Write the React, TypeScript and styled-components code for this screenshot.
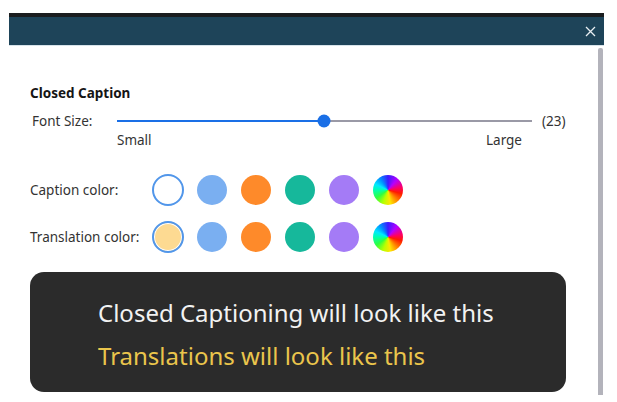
import React from 'react';
import styled, { createGlobalStyle } from 'styled-components';

const GlobalStyle = createGlobalStyle`
  html, body {
    margin: 0;
    padding: 0;
    background: #ffffff;
    font-family: 'Noto Sans', 'Open Sans', sans-serif;
    overflow: hidden;
  }
`;

const Window = styled.div`
  margin: 13px 0 0 9px;
  width: 595px;
  height: 389px;
  display: flex;
  flex-direction: column;
  background: #ffffff;
`;

const TopStrip = styled.div`
  height: 4px;
  background: #1b1d1f;
`;

const Header = styled.div`
  height: 28px;
  background: #1e4459;
  border-bottom: 1px solid #d7e3ea;
  display: flex;
  align-items: center;
  justify-content: flex-end;
  padding-right: 8px;
`;

const CloseButton = styled.button`
  width: 12px;
  height: 12px;
  padding: 0;
  border: none;
  background: transparent;
  display: flex;
  align-items: center;
  justify-content: center;
  cursor: pointer;
`;

const Body = styled.div`
  flex: 1;
  display: flex;
  min-height: 0;
`;

const Content = styled.div`
  flex: 1;
  padding: 39px 0 0 21px;
  display: flex;
  flex-direction: column;
`;

const ScrollBar = styled.div`
  width: 5px;
  margin: 2px 1px 7px 0;
  background: #b3b3bb;
  border-radius: 2px 2px 0 0;
`;

const Title = styled.div`
  font-size: 13.5px;
  line-height: 16px;
  font-weight: 700;
  color: #151515;
`;

const SliderRow = styled.div`
  margin-top: 12px;
  display: flex;
  align-items: center;
  height: 16px;
`;

const Label = styled.div<{ $width: number; $indent?: number }>`
  width: ${p => p.$width}px;
  padding-left: ${p => p.$indent ?? 0}px;
  box-sizing: border-box;
  flex-shrink: 0;
  font-size: 13.5px;
  color: #333333;
  white-space: nowrap;
`;

const Track = styled.div`
  position: relative;
  width: 415px;
  height: 2px;
  background: #9a99a6;
`;

const Fill = styled.div`
  height: 2px;
  background: #1a6fe6;
`;

const Thumb = styled.div`
  position: absolute;
  top: 50%;
  width: 13px;
  height: 13px;
  border-radius: 50%;
  background: #1a6fe6;
  transform: translate(-50%, -50%);
`;

const Value = styled.div`
  margin-left: 10px;
  font-size: 13.5px;
  color: #333333;
`;

const ScaleRow = styled.div`
  margin: 3px 0 0 87px;
  width: 405px;
  height: 16px;
  display: flex;
  justify-content: space-between;
  font-size: 13.5px;
  line-height: 16px;
  color: #333333;
`;

const ColorRow = styled.div<{ $gap: number }>`
  margin-top: ${p => p.$gap}px;
  height: 34px;
  display: flex;
  align-items: center;
`;

const Swatches = styled.div`
  display: grid;
  grid-template-columns: repeat(6, 44px);
  align-items: center;
  justify-items: center;
`;

const Swatch = styled.div<{ $color: string; $selected?: boolean }>`
  width: ${p => (p.$selected ? 32 : 30)}px;
  height: ${p => (p.$selected ? 32 : 30)}px;
  box-sizing: border-box;
  border-radius: 50%;
  background: ${p => p.$color};
  border: ${p => (p.$selected ? '2px solid #5196ea' : 'none')};
  box-shadow: ${p => (p.$selected ? 'inset 0 0 0 1px #ffffff' : 'none')};
  cursor: pointer;
`;

const Preview = styled.div`
  margin-top: 18px;
  width: 536px;
  height: 120px;
  box-sizing: border-box;
  background: #2b2b2b;
  border-radius: 14px;
  padding: 26px 0 0 68px;
`;

const PreviewLine = styled.div<{ $color: string; $gap?: number }>`
  margin-top: ${p => p.$gap ?? 0}px;
  font-size: 24px;
  line-height: 30px;
  color: ${p => p.$color};
  white-space: nowrap;
`;

const rainbow =
  'conic-gradient(#3a1cff 0deg, #b400ff 40deg, #ff0060 80deg, #ff1a00 105deg, #ff8a00 140deg, #ffe600 170deg, #b8ff00 200deg, #30ff40 235deg, #00ffb0 270deg, #00e8ff 295deg, #0090ff 325deg, #3a1cff 360deg)';

const palette = ['#7aaff1', '#fe8a2a', '#16b89b', '#a47bf6', rainbow];

const ColorPicker: React.FC<{ label: string; first: string; gap: number }> = ({ label, first, gap }) => (
  <ColorRow $gap={gap}>
    <Label $width={116}>{label}</Label>
    <Swatches>
      <Swatch $color={first} $selected />
      {palette.map(c => (
        <Swatch key={c} $color={c} />
      ))}
    </Swatches>
  </ColorRow>
);

const App: React.FC = () => {
  const percent = 49.9;

  return (
    <>
      <GlobalStyle />
      <Window>
        <TopStrip />
        <Header>
          <CloseButton aria-label="Close">
            <svg width="11" height="11" viewBox="0 0 11 11">
              <path d="M1 1L10 10M10 1L1 10" stroke="#e8eef2" strokeWidth="1.3" />
            </svg>
          </CloseButton>
        </Header>
        <Body>
          <Content>
            <Title>Closed Caption</Title>
            <SliderRow>
              <Label $width={87} $indent={2}>Font Size:</Label>
              <Track>
                <Fill style={{ width: `${percent}%` }} />
                <Thumb style={{ left: `${percent}%` }} />
              </Track>
              <Value>(23)</Value>
            </SliderRow>
            <ScaleRow>
              <span>Small</span>
              <span>Large</span>
            </ScaleRow>
            <ColorPicker label="Caption color:" first="#ffffff" gap={25} />
            <ColorPicker label="Translation color:" first="#fdda92" gap={13} />
            <Preview>
              <PreviewLine $color="#f2f2f2">Closed Captioning will look like this</PreviewLine>
              <PreviewLine $color="#eac54c" $gap={13}>Translations will look like this</PreviewLine>
            </Preview>
          </Content>
          <ScrollBar />
        </Body>
      </Window>
    </>
  );
};

export default App;
